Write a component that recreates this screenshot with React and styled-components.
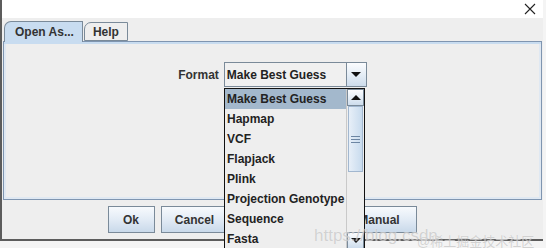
import React from "react";
import styled, { createGlobalStyle } from "styled-components";

const Global = createGlobalStyle`
  html, body {
    margin: 0;
    padding: 0;
    width: 546px;
    height: 248px;
    overflow: hidden;
    background: #f4f4f4;
  }
  * { box-sizing: border-box; }
`;

const Window = styled.div`
  position: relative;
  width: 543px;
  height: 241px;
  border-left: 2px solid #5c5c5c;
  border-bottom: 2px solid #5c5c5c;
  background: #eeeeee;
  display: flex;
  flex-direction: column;
  font-family: "Liberation Sans", Arial, sans-serif;
  font-size: 12px;
  font-weight: bold;
  color: #333333;
`;

const TitleBar = styled.div`
  height: 18px;
  background: #ffffff;
  display: flex;
  justify-content: flex-end;
  align-items: center;
  padding-right: 7px;
`;

const Body = styled.div`
  flex: 1;
  display: flex;
  flex-direction: column;
  padding: 3px 1px 0 1px;
`;

const TabRow = styled.div`
  display: flex;
  align-items: flex-end;
  height: 20px;
  padding-left: 1px;
  position: relative;
  z-index: 1;
`;

const Tab = styled.div`
  position: relative;
  height: ${(p) => (p.$active ? "21px" : "19px")};
  margin-bottom: ${(p) => (p.$active ? "-1px" : "0")};
  padding: 0 ${(p) => p.$pad}px 0 ${(p) => p.$left}px;
  display: flex;
  align-items: center;
  background: ${(p) => (p.$active ? "#c8dcf0" : "#eeeeee")};
  border: 1px solid #7a8a99;
  border-bottom: ${(p) => (p.$active ? "none" : "1px solid #7a8a99")};
  border-top-left-radius: 7px 7px;
  color: #333333;
  margin-right: 1px;
`;

const Panel = styled.div`
  height: 159px;
  border: 1px solid #7f95b0;
  box-shadow: inset 0 2px 0 #c8dcf0, inset 0 0 0 2px #dfe8f2;
  display: flex;
  justify-content: center;
  align-items: flex-start;
  padding-top: 20px;
`;

const FormatRow = styled.div`
  display: flex;
  align-items: center;
  gap: 5px;
`;

const Label = styled.span`
  color: #333333;
`;

const Combo = styled.div`
  width: 143px;
  height: 25px;
  border: 1px solid #7a8a99;
  background: #f0f0f0;
  display: flex;
  align-items: stretch;
`;

const ComboText = styled.div`
  flex: 1;
  display: flex;
  align-items: center;
  padding-left: 2px;
  color: #222222;
`;

const ArrowButton = styled.div`
  flex-shrink: 0;
  width: ${(p) => p.$w || 20}px;
  height: ${(p) => (p.$h ? `${p.$h}px` : "auto")};
  border-left: 1px solid #7a8a99;
  border-top: ${(p) => (p.$boxed ? "1px solid #7a8a99" : "none")};
  border-bottom: ${(p) => (p.$boxed ? "1px solid #7a8a99" : "none")};
  border-right: ${(p) => (p.$boxed ? "1px solid #7a8a99" : "none")};
  background: linear-gradient(#fbfcfe, #e3ecf5 55%, #cddcec);
  display: flex;
  align-items: center;
  justify-content: center;
`;

const Triangle = styled.span`
  width: 0;
  height: 0;
  border-left: 5px solid transparent;
  border-right: 5px solid transparent;
  ${(p) =>
    p.$up ? "border-bottom: 5px solid #111;" : "border-top: 5px solid #111;"}
`;

const ButtonRow = styled.div`
  display: flex;
  justify-content: center;
  gap: 6px;
  margin-top: 6px;
  padding-right: 21px;
`;

const Button = styled.div`
  width: ${(p) => p.$w}px;
  height: 27px;
  border: 1px solid #7a8a99;
  background: linear-gradient(#f7fafd, #e2ebf5 50%, #c9d9ea);
  display: flex;
  align-items: center;
  justify-content: center;
  color: #333333;
`;

const Popup = styled.div`
  position: absolute;
  left: 222px;
  top: 88px;
  width: 141px;
  height: 162px;
  border: 1px solid #111111;
  background: #eeeeee;
  display: flex;
  overflow: hidden;
  z-index: 3;
`;

const List = styled.div`
  flex: 1;
  display: flex;
  flex-direction: column;
`;

const Item = styled.div`
  height: 20px;
  flex-shrink: 0;
  display: flex;
  align-items: center;
  padding-left: 2px;
  color: #222222;
  background: ${(p) => (p.$selected ? "#a3b8cc" : "transparent")};
`;

const ScrollBar = styled.div`
  width: 18px;
  display: flex;
  flex-direction: column;
  border-left: 1px solid #c9c9c9;
  background: #eeeeee;
`;

const Thumb = styled.div`
  height: 66px;
  flex-shrink: 0;
  margin: 0 1px;
  border: 1px solid #a2b7cf;
  background: linear-gradient(90deg, #e7eff8, #c8dbee);
  display: flex;
  flex-direction: column;
  align-items: center;
  justify-content: center;
  gap: 2px;
`;

const Grip = styled.span`
  width: 9px;
  height: 1px;
  background: #6d86a3;
`;

const Track = styled.div`
  flex: 1;
`;

const Watermark = styled.div`
  position: absolute;
  z-index: 4;
  left: ${(p) => p.$x}px;
  top: ${(p) => p.$y}px;
  font-family: ${(p) =>
    p.$cjk
      ? '"Liberation Sans", "Noto Sans CJK SC", sans-serif'
      : '"Liberation Sans", Arial, sans-serif'};
  font-size: ${(p) => p.$size}px;
  font-weight: normal;
  color: rgba(170, 170, 170, 0.5);
  text-shadow: 0 0 1px rgba(255, 255, 255, 0.8);
  white-space: nowrap;
  pointer-events: none;
`;

const formats = [
  "Make Best Guess",
  "Hapmap",
  "VCF",
  "Flapjack",
  "Plink",
  "Projection Genotype",
  "Sequence",
  "Fasta",
];

const CloseIcon = () => (
  <svg width="12" height="12" viewBox="0 0 12 12">
    <path d="M1 1 L11 11 M11 1 L1 11" stroke="#222" strokeWidth="1.1" />
  </svg>
);

const App = () => {
  return (
    <>
      <Global />
      <Window>
        <TitleBar>
          <CloseIcon />
        </TitleBar>
        <Body>
          <TabRow>
            <Tab $active $left={10} $pad={8}>
              Open As...
            </Tab>
            <Tab $left={8} $pad={8}>
              Help
            </Tab>
          </TabRow>
          <Panel>
            <FormatRow>
              <Label>Format</Label>
              <Combo>
                <ComboText>Make Best Guess</ComboText>
                <ArrowButton>
                  <Triangle />
                </ArrowButton>
              </Combo>
            </FormatRow>
          </Panel>
          <ButtonRow>
            <Button $w={47}>Ok</Button>
            <Button $w={68}>Cancel</Button>
            <Button $w={71}>Browse</Button>
            <Button $w={105}>User Manual</Button>
          </ButtonRow>
        </Body>
        <Popup>
          <List>
            {formats.map((f, i) => (
              <Item key={f} $selected={i === 0}>
                {f}
              </Item>
            ))}
          </List>
          <ScrollBar>
            <ArrowButton $w={17} $h={17} $boxed>
              <Triangle $up />
            </ArrowButton>
            <Thumb>
              <Grip />
              <Grip />
              <Grip />
            </Thumb>
            <Track />
            <ArrowButton $w={17} $h={17} $boxed>
              <Triangle />
            </ArrowButton>
          </ScrollBar>
        </Popup>
        <Watermark $x={312} $y={226} $size={17}>
          https://blog.csdn
        </Watermark>
        <Watermark $x={415} $y={231} $size={13} $cjk>
          @稀土掘金技术社区
        </Watermark>
      </Window>
    </>
  );
};

export default App;
